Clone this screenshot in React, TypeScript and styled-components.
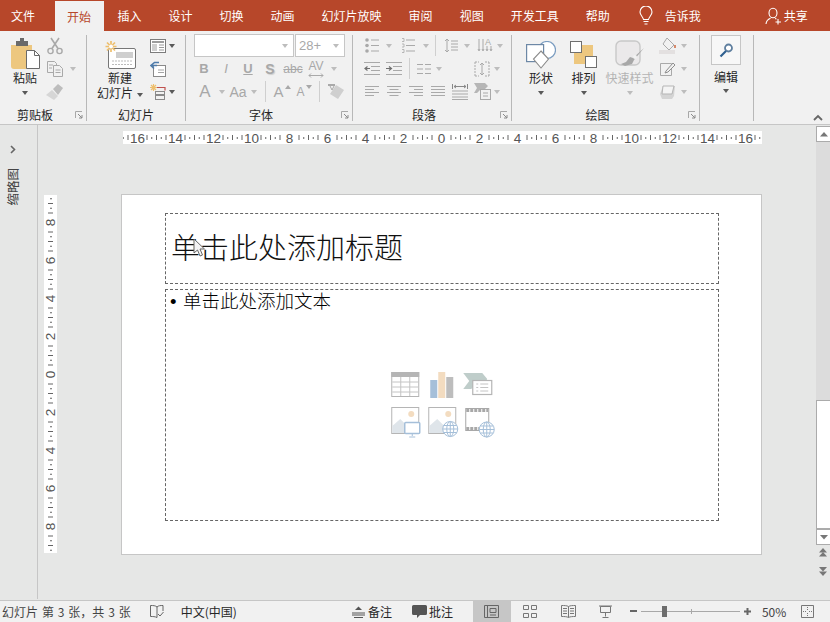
import React from "react";
import styled, { createGlobalStyle } from "styled-components";

const GlobalStyle = createGlobalStyle`
  html, body { margin: 0; padding: 0; }
  body {
    width: 830px;
    height: 622px;
    overflow: hidden;
    font-family: "Noto Sans CJK SC", "Noto Sans", sans-serif;
    font-size: 12px;
    color: #262626;
  }
`;

const Page = styled.div`
  display: flex;
  flex-direction: column;
  width: 830px;
  height: 622px;
  background: #e6e7e6;
`;

/* title tabs */
const TabBar = styled.div`
  display: flex;
  align-items: stretch;
  height: 31px;
  background: #b7472a;
  color: #fff;
`;

const Tab = styled.div<{ $active?: boolean; $first?: boolean }>`
  display: flex;
  align-items: center;
  height: ${(p) => (p.$active ? "30px" : "31px")};
  margin-top: ${(p) => (p.$active ? "1px" : "0")};
  padding: ${(p) => (p.$active ? "0 13px 0 12px" : p.$first ? "0 20px 0 11px" : "0 13.5px")};
  background: ${(p) => (p.$active ? "#f1f1f1" : "transparent")};
  color: ${(p) => (p.$active ? "#b7472a" : "#fff")};
`;

const TellMe = styled.div`
  display: flex;
  align-items: center;
  gap: 12px;
  margin-left: 15.5px;
`;

const Share = styled.div`
  display: flex;
  align-items: center;
  gap: 2px;
  margin-left: 64px;
`;

/* ribbon */
const Ribbon = styled.div`
  position: relative;
  display: flex;
  height: 93px;
  background: #f1f1f1;
  border-bottom: 1px solid #c6c6c6;
`;

const Group = styled.section<{ $w: number }>`
  position: relative;
  display: flex;
  flex-direction: column;
  box-sizing: border-box;
  width: ${(p) => p.$w}px;
  margin: 4px 0 3px;
  border-right: 1px solid #b8b8b8;
`;

const GroupBody = styled.div<{ $pl?: number }>`
  display: flex;
  height: 69px;
  margin-top: -1px;
  padding-left: ${(p) => p.$pl ?? 0}px;
`;

const GroupLabel = styled.div<{ $launcher?: boolean }>`
  height: 17px;
  padding-right: ${(p) => (p.$launcher ? "16px" : "0")};
  text-align: center;
  line-height: 17px;
  margin-top: 3px;
`;

const Launcher = styled.svg`
  position: absolute;
  right: 3px;
  bottom: 2px;
  width: 8px;
  height: 8px;
`;

const BigButton = styled.div<{ $w: number; $muted?: boolean }>`
  display: flex;
  flex-direction: column;
  align-items: center;
  width: ${(p) => p.$w}px;
  color: ${(p) => (p.$muted ? "#b4b4b4" : "#262626")};
  line-height: 15px;
`;

const BigIcon = styled.div`
  display: flex;
  align-items: flex-end;
  justify-content: center;
  height: 35px;
  margin-bottom: 1px;
`;

const Column = styled.div`
  display: flex;
  flex-direction: column;
`;

const Row = styled.div`
  display: flex;
  align-items: center;
  height: 23px;
`;

const Cell = styled.div<{ $w: number }>`
  display: flex;
  align-items: center;
  justify-content: center;
  flex: none;
  width: ${(p) => p.$w}px;
  height: 23px;
`;

const StackCell = styled(Cell)`
  flex-direction: column;
  gap: 1px;
`;

const Glyph = styled.span<{ $size?: number; $weight?: number; $italic?: boolean; $under?: boolean; $strike?: boolean; $shadow?: boolean }>`
  font-family: "Liberation Sans", Arial, sans-serif;
  font-size: ${(p) => p.$size ?? 13}px;
  font-weight: ${(p) => p.$weight ?? 400};
  font-style: ${(p) => (p.$italic ? "italic" : "normal")};
  text-decoration: ${(p) => (p.$under ? "underline" : p.$strike ? "line-through" : "none")};
  text-shadow: ${(p) => (p.$shadow ? "1px 1px 1px #cfcfcf" : "none")};
  color: #a8a8a8;
  line-height: 1;
`;

const Caret = styled.i<{ $dark?: boolean }>`
  display: inline-block;
  flex: none;
  width: 0;
  height: 0;
  border-left: 3.5px solid transparent;
  border-right: 3.5px solid transparent;
  border-top: 4px solid ${(p) => (p.$dark ? "#595959" : "#bdbdbd")};
`;

const InlineCaret = styled(Caret)`
  margin-left: 4px;
  vertical-align: middle;
`;

const BigCaret = styled.div`
  display: flex;
  justify-content: center;
  margin-top: 6px;
`;

const EditCaret = styled(Caret)`
  margin-top: 1px;
`;

const FontStep = styled.svg`
  flex: none;
  width: 6px;
  height: 4px;
  margin: -10px 0 0 1px;
`;

const VSep = styled.div`
  flex: none;
  width: 1px;
  height: 21px;
  background: #cfcfcf;
`;

const Combo = styled.div<{ $w: number }>`
  display: flex;
  align-items: center;
  justify-content: space-between;
  box-sizing: border-box;
  width: ${(p) => p.$w}px;
  height: 23px;
  margin-right: 1px;
  padding: 0 5px 0 3px;
  background: #fff;
  border: 1px solid #c6c6c6;
  font-family: "Liberation Sans", Arial, sans-serif;
  font-size: 13px;
  color: #a8a8a8;
`;

const FindBox = styled.div`
  display: flex;
  align-items: center;
  justify-content: center;
  box-sizing: border-box;
  width: 30px;
  height: 30px;
  margin: 1px 0 0;
  border: 1px solid #c6c6c6;
  background: #f7f7f7;
`;

const Collapse = styled.svg`
  position: absolute;
  right: 7px;
  bottom: 3px;
  width: 10px;
  height: 7px;
`;

/* work area */
const Work = styled.div`
  display: flex;
  flex: 1;
  min-height: 0;
`;

const ThumbPane = styled.div`
  display: flex;
  flex-direction: column;
  align-items: center;
  box-sizing: border-box;
  width: 38px;
  padding: 20px 12px 0 0;
  border-right: 1px solid #c6c6c6;
  margin-bottom: 1px;
  color: #555;
`;

const PaneTitle = styled.div`
  writing-mode: vertical-rl;
  text-orientation: sideways;
  transform: rotate(180deg);
  margin-top: 14px;
  font-size: 12.5px;
  line-height: 14px;
  color: #444;
`;

const Stage = styled.div`
  display: flex;
  flex-direction: column;
  width: 778px;
`;

const HRuler = styled.svg`
  display: block;
  width: 639px;
  height: 13px;
  margin: 6px 0 0 85px;
  background: #fff;
`;

const StageRow = styled.div`
  display: flex;
  align-items: flex-start;
  margin: 50px 0 0 6px;
`;

const VRuler = styled.svg`
  flex: none;
  display: block;
  width: 13px;
  height: 358px;
  margin-top: 1px;
  background: #fff;
`;

const Slide = styled.div`
  display: flex;
  flex-direction: column;
  box-sizing: border-box;
  width: 641px;
  height: 361px;
  margin-left: 64px;
  padding: 18px 0 0 43px;
  background: #fff;
  border: 1px solid #c6c6c6;
`;

const Placeholder = styled.div`
  box-sizing: border-box;
  width: 554px;
  border: 1px dashed #666;
`;

const TitleBox = styled(Placeholder)`
  position: relative;
  display: flex;
  align-items: center;
  height: 71px;
  padding: 0 0 6px 5px;
  font-size: 29px;
  font-weight: 300;
  color: #111;
`;

const BodyBox = styled(Placeholder)`
  position: relative;
  height: 232px;
  margin-top: 5px;
  padding: 0 4px;
  font-size: 18.5px;
  font-weight: 300;
  line-height: 21px;
  color: #000;
`;

const Bullet = styled.span`
  display: inline-block;
  width: 13px;
  font-family: "Liberation Sans", Arial, sans-serif;
`;

const Cursor = styled.svg`
  position: absolute;
  left: 27px;
  top: 24px;
  width: 12px;
  height: 19px;
`;

const ContentIcons = styled.div`
  position: absolute;
  left: 50%;
  top: 50%;
  display: grid;
  grid-template-columns: repeat(3, 36.5px);
  grid-auto-rows: 34px;
  transform: translate(calc(-50% + 2px), -50%);
`;

const ContentIcon = styled.svg`
  width: 36.5px;
  height: 34px;
`;

/* scrollbar */
const ScrollBar = styled.div`
  display: flex;
  flex-direction: column;
  width: 14px;
  margin-top: 1px;
`;

const ScrollButton = styled.div`
  display: flex;
  align-items: center;
  justify-content: center;
  box-sizing: border-box;
  flex: none;
  height: 16px;
  background: #fff;
  border: 1px solid #ababab;
  border-right: 0;
`;

const ScrollTrack = styled.div`
  height: 258px;
  background: #dcdcdc;
`;

const ScrollThumb = styled.div`
  box-sizing: border-box;
  height: 129px;
  background: #fff;
  border: 1px solid #ababab;
  border-right: 0;
`;

const PageArrows = styled.div`
  display: flex;
  flex-direction: column;
  align-items: center;
  gap: 10px;
  margin-top: 3px;
`;

/* status bar */
const StatusBar = styled.footer`
  display: flex;
  align-items: center;
  box-sizing: border-box;
  height: 22px;
  border-top: 1px solid #c6c6c6;
  background: #f1f1f1;
  color: #444;
  font-size: 12px;
`;

const StatusText = styled.span<{ $ml?: number; $dark?: boolean; $wide?: boolean }>`
  margin-left: ${(p) => p.$ml ?? 0}px;
  color: ${(p) => (p.$dark ? "#262626" : "#444")};
  word-spacing: ${(p) => (p.$wide ? "1.2px" : "0")};
  white-space: pre;
`;

const StatusIcon = styled.div<{ $w: number; $ml?: number; $active?: boolean }>`
  display: flex;
  align-items: center;
  justify-content: center;
  flex: none;
  width: ${(p) => p.$w}px;
  height: 21px;
  margin-left: ${(p) => p.$ml ?? 0}px;
  background: ${(p) => (p.$active ? "#c6c6c6" : "transparent")};
`;

const ZoomTrack = styled.div`
  position: relative;
  width: 99px;
  height: 1px;
  margin: 0 4px 0 4px;
  background: #a8a8a8;
`;

const ZoomThumb = styled.div`
  position: absolute;
  left: 21px;
  top: -5px;
  width: 5px;
  height: 11px;
  background: #6d6d6d;
`;

const ZoomTick = styled.div`
  position: absolute;
  left: 50px;
  top: -2px;
  width: 1px;
  height: 5px;
  background: #a8a8a8;
`;

/* icons */
const G = "#a9a9a9";
const D = "#6f6f6f";

const Svg = ({ w, h, children }: { w: number; h: number; children: React.ReactNode }) => (
  <svg width={w} height={h} viewBox={`0 0 ${w} ${h}`} fill="none">
    {children}
  </svg>
);

const PasteIcon = () => (
  <Svg w={30} h={32}>
    <path d="M1 8h21v24H4a3 3 0 0 1-3-3z" fill="#edc77f" />
    <path d="M6 4h4V1h4v3h4v5H6z" fill="#6a6a6a" />
    <path d="M16.5 13.5h8l5 5v13h-13z" fill="#fff" stroke="#6a6a6a" />
    <path d="M24.5 13.5v5h5" stroke="#6a6a6a" />
  </Svg>
);
const ScissorsIcon = () => (
  <Svg w={16} h={18}>
    <circle cx="3.5" cy="14" r="2.6" stroke={G} strokeWidth="1.4" />
    <circle cx="12.5" cy="14" r="2.6" stroke={G} strokeWidth="1.4" />
    <path d="M5 11.5 12 1M11 11.5 4 1" stroke={G} strokeWidth="1.6" />
  </Svg>
);
const CopyIcon = () => (
  <Svg w={16} h={16}>
    <path d="M.5.5h7l2 2v9h-9z" fill="#f1f1f1" stroke={G} />
    <path d="M6.5 4.5h6l3 3v8h-9z" fill="#f1f1f1" stroke={G} />
    <path d="M2 4h4M2 7h3M8.5 9h5M8.5 11.5h5" stroke={G} />
  </Svg>
);
const BrushIcon = () => (
  <Svg w={18} h={16}>
    <path d="M0 11 6 6l6 6-4 4z" fill="#d6d6d6" />
    <path d="M7 5l5-5 5 4-5 7z" fill="#bdbdbd" />
  </Svg>
);
const NewSlideIcon = () => (
  <Svg w={31} h={28}>
    <rect x="3.5" y="7.5" width="27" height="20" rx="1.5" fill="#fff" stroke="#777" />
    <rect x="11" y="11" width="17" height="6" fill="#cfcfcf" />
    <path d="M7 20h20M7 23.5h20" stroke="#bbb" strokeDasharray="2 1" />
    <path d="M6 0v11M.5 5.5h11M2 1.5l8 8M10 1.5l-8 8" stroke="#eebf6d" strokeWidth="1.7" />
    <circle cx="6" cy="5.5" r="2" fill="#fff" />
  </Svg>
);
const LayoutIcon = () => (
  <Svg w={16} h={14}>
    <rect x=".5" y=".5" width="15" height="13" fill="#fff" stroke="#7c7c7c" />
    <path d="M2 3h12" stroke="#7c7c7c" strokeWidth="1.5" />
    <rect x="2" y="5" width="5" height="7" fill="#cfcfcf" />
    <path d="M9 6h5M9 8.5h5M9 11h5" stroke="#9a9a9a" />
  </Svg>
);
const ResetIcon = () => (
  <Svg w={16} h={16}>
    <rect x="3.5" y="4.5" width="12" height="11" fill="#fff" stroke="#8a8a8a" />
    <path d="M8 9h6M8 11.5h6" stroke="#a5a5a5" />
    <path d="M9 1.5H4.5L1 4.5l3 3M1.5 4.5H7" stroke="#4f7cab" strokeWidth="1.6" />
  </Svg>
);
const SectionIcon = () => (
  <Svg w={16} h={16}>
    <path d="M3.5 0v7M0 3.5h7M1 1l5 5M6 1 1 6" stroke="#eebf6d" strokeWidth="1.2" />
    <path d="M7 3.5h8v3" stroke="#c0504d" strokeWidth="1.2" />
    <rect x="5.5" y="7.5" width="9" height="3" stroke="#8a8a8a" />
    <rect x="5.5" y="11.5" width="9" height="4" stroke="#8a8a8a" />
  </Svg>
);
const EraserIcon = () => (
  <Svg w={18} h={18}>
    <path d="M9 2 17 7l-6 9-8-5z" fill="#cfcfcf" />
    <path d="M1 1h7v2H1z" fill={G} />
    <path d="M3 3l2 4 2-4" stroke={G} />
  </Svg>
);
const BulletsIcon = () => (
  <Svg w={14} h={15}>
    {[2, 7.5, 13].map((y) => (
      <g key={y}>
        <circle cx="2" cy={y} r="1.8" fill={G} />
        <path d={`M6 ${y}h8`} stroke={G} />
      </g>
    ))}
  </Svg>
);
const NumberingIcon = () => (
  <Svg w={14} h={15}>
    {[2, 7.5, 13].map((y) => (
      <g key={y}>
        <path d={`M1 ${y - 1.5}h2v3H1`} stroke={G} strokeWidth=".8" />
        <path d={`M5 ${y}h9`} stroke={G} />
      </g>
    ))}
  </Svg>
);
const LineSpacingIcon = () => (
  <Svg w={14} h={15}>
    <path d="M3 1v13M1 3l2-2 2 2M1 12l2 2 2-2" stroke={G} />
    <path d="M7 3h7M7 6h7M7 9h7M7 12h7" stroke={G} />
  </Svg>
);
const TextDirIcon = () => (
  <Svg w={16} h={16}>
    <path d="M2 1v11M6 1v11M10 8v4M14 8v4M1 11l1 2 1-2M5 11l1 2 1-2M9 11l1 2 1-2M13 11l1 2 1-2" stroke={G} />
    <text x="8" y="7" fontFamily="Liberation Sans" fontSize="9" fill={G}>A</text>
  </Svg>
);
const IndentIcon = ({ flip }: { flip?: boolean }) => (
  <Svg w={16} h={13}>
    <path d="M0 .5h16M7 4.5h9M7 8.5h9M0 12.5h16" stroke={G} />
    <path d={flip ? "M0 6.5h5M3 4.5l2.5 2-2.5 2" : "M1 6.5h5M3.5 4.500 1 6.5l2.5 2"} stroke={D} strokeWidth="1.2" />
  </Svg>
);
const ColumnsIcon = () => (
  <Svg w={14} h={12}>
    <path d="M0 1.5h6M8 1.5h6M0 6h6M8 6h6M0 10.5h6M8 10.5h6" stroke={G} />
  </Svg>
);
const AlignTextIcon = () => (
  <Svg w={16} h={16}>
    <path d="M1 1h4M11 1h4M1 15h4M11 15h4M1 1v14M15 1v14" stroke={G} strokeDasharray="2 1" />
    <path d="M8 2v12M6 4l2-2 2 2M6 12l2 2 2-2" stroke={G} />
  </Svg>
);
const AlignIcon = ({ mode }: { mode: "l" | "c" | "r" | "j" }) => {
  const short = mode === "j" ? [0, 14] : mode === "l" ? [0, 9] : mode === "c" ? [2.5, 11.5] : [5, 14];
  return (
    <Svg w={14} h={11}>
      <path d={`M0 .5h14M${short[0]} 3.5H${short[1]}M0 6.5h14M${short[0]} 9.5H${short[1]}`} stroke={G} />
    </Svg>
  );
};
const DistributeIcon = () => (
  <Svg w={16} h={16}>
    <path d="M.5 0v5M15.5 0v5M2 2.5h12M4 1 2 2.5 4 4M12 1l2 1.5L12 4" stroke="#888" />
    <path d="M0 7h16M0 10h16M0 13h16M0 15.5h16" stroke={G} />
  </Svg>
);
const SmartArtIcon = () => (
  <Svg w={17} h={17}>
    <path d="M0 0h11l3 3-3 3 1 1H6L3 10H0l3-5z" fill="#b6b6b6" />
    <rect x="6.5" y="6.5" width="10" height="10" fill="#f1f1f1" stroke={G} />
    <path d="M9 10h5M9 13h5" stroke={G} />
  </Svg>
);
const ShapesIcon = () => (
  <Svg w={30} h={28}>
    <circle cx="21" cy="9" r="8.5" fill="#fff" stroke="#7a9cc0" strokeWidth="1.2" />
    <rect x=".6" y="3.6" width="17" height="17" fill="#fff" stroke="#6d88a6" strokeWidth="1.2" />
    <path d="M15 10l7.5 8L15 27l-7.5-9z" fill="#fff" stroke="#8a8a8a" strokeWidth="1.1" />
  </Svg>
);
const ArrangeIcon = () => (
  <Svg w={28} h={28}>
    <rect x="4" y="4" width="19" height="19" fill="#edc77f" />
    <rect x=".5" y=".5" width="11" height="11" fill="#fff" stroke="#6f6f6f" strokeWidth="1" />
    <rect x="15.5" y="15.5" width="11" height="11" fill="#fff" stroke="#6f6f6f" strokeWidth="1" />
  </Svg>
);
const QuickStyleIcon = () => (
  <Svg w={30} h={29}>
    <rect x="1" y="1" width="24" height="24" rx="5" fill="#ebe9ea" stroke="#c8c8c8" strokeWidth="1.4" />
    <path d="M29 8 18 18l-3-1-4 5-5 2 4 2 7-2 2-4z" fill="#a8a8a8" />
    <circle cx="20" cy="17" r="2" fill="#f1f1f1" />
  </Svg>
);
const FillIcon = () => (
  <Svg w={18} h={17}>
    <path d="M8 1 15 8l-5 5-6-6z" fill="#f1f1f1" stroke={G} />
    <path d="M15 8h2v3h-2z" fill="#d58a6c" />
    <rect x="0" y="13" width="16" height="4" fill="#e3e0e0" />
  </Svg>
);
const OutlineIcon = () => (
  <Svg w={16} h={15}>
    <path d="M.5 2.5h11v12H.5z" fill="#f1f1f1" stroke={G} />
    <path d="M6 10 13 2l2 2-7 7-3 1z" fill="#f1f1f1" stroke="#8f8f8f" />
  </Svg>
);
const EffectIcon = () => (
  <Svg w={16} h={14}>
    <path d="M3 1h12l-1 10-2 3H2L0 9z" fill="#d4d4d4" />
    <path d="M3 1h11L12 9H2z" fill="#f4f4f4" stroke="#b5b5b5" />
  </Svg>
);
const SearchIcon = () => (
  <Svg w={14} h={15}>
    <circle cx="9.5" cy="5" r="3.5" stroke="#5f7f9f" strokeWidth="1.8" fill="#fff" />
    <path d="M7 8 1.5 13.5" stroke="#2f6090" strokeWidth="2.2" />
  </Svg>
);
const BulbIcon = () => (
  <Svg w={14} h={20}>
    <path d="M4.5 13.5C4 10.5 1 9.5 1 6a6 6 0 0 1 12 0c0 3.5-3 4.5-3.5 7.5z" stroke="#fff" strokeWidth="1.1" />
    <path d="M4.5 15.5h5M5.5 18h3" stroke="#fff" strokeWidth="1.2" />
  </Svg>
);
const PersonIcon = () => (
  <Svg w={17} h={18}>
    <ellipse cx="8" cy="6" rx="4" ry="4.8" stroke="#fff" strokeWidth="1.1" />
    <path d="M1 17c.3-3.5 2.5-5 4.5-5.8M10 11.5l1.5.5" stroke="#fff" strokeWidth="1.1" />
    <path d="M13 12v5.5M10.5 15h5.500" stroke="#fff" strokeWidth="1.1" />
  </Svg>
);

const TableIcon = () => (
  <ContentIcon viewBox="0 0 36.5 34">
    <rect x="2.5" y="1.5" width="27" height="24" fill="#fff" stroke="#b5b5b5" />
    <rect x="2" y="1" width="28" height="5" fill="#b5b5b5" />
    <path d="M11.5 6v19M20.5 6v19M3 11h26M3 16h26M3 21h26" stroke="#c4c4c4" />
  </ContentIcon>
);
const ChartIcon = () => (
  <ContentIcon viewBox="0 0 36.5 34">
    <rect x="4" y="9" width="7" height="18" fill="#a5bfd9" />
    <rect x="12" y="1" width="7" height="26" fill="#f3dcc0" />
    <rect x="20" y="6" width="7" height="21" fill="#bdbdbd" />
  </ContentIcon>
);
const SmartIcon = () => (
  <ContentIcon viewBox="0 0 36.5 34">
    <path d="M1 2h19l5 6-5 8h-9l-2 2H1l6-8z" fill="#bfcdca" />
    <rect x="10.5" y="9.5" width="19" height="14" fill="#fff" stroke="#b5b5b5" strokeWidth="1.2" />
    <path d="M14 13h2M18 13h8M14 16.5h2M18 16.5h8M14 20h2M18 20h8" stroke="#c4c4c4" />
  </ContentIcon>
);
const Globe = ({ x, y }: { x: number; y: number }) => (
  <g stroke="#a5bfd9" fill="#fff">
    <circle cx={x} cy={y} r="7.5" />
    <ellipse cx={x} cy={y} rx="3.5" ry="7.5" />
    <path d={`M${x} ${y - 7.5}v15M${x - 7.5} ${y}h15M${x - 6.5} ${y - 3.5}h13M${x - 6.5} ${y + 3.5}h13`} />
  </g>
);
const PictureIcon = ({ globe }: { globe?: boolean }) => (
  <ContentIcon viewBox="0 0 36.5 34">
    <rect x="2.5" y="2.5" width="27" height="26" fill="#fff" stroke="#b5b5b5" />
    <path d="M3 28v-7l8-7 7 7 2 7z" fill="#dfe5ea" />
    <circle cx="22" cy="9" r="3" fill="#f3dcc0" />
    {globe ? (
      <Globe x={24} y={24} />
    ) : (
      <g>
        <rect x="15.5" y="17.5" width="15" height="11" rx="1" fill="#fff" stroke="#a5bfd9" strokeWidth="1.5" />
        <path d="M23 29v2M20 32h6" stroke="#a5bfd9" />
      </g>
    )}
  </ContentIcon>
);
const VideoIcon = () => (
  <ContentIcon viewBox="0 0 36.5 34">
    <rect x="3.5" y="3.5" width="23" height="22" fill="#fff" stroke="#a8a8a8" />
    <path d="M4 5.5h22M4 23.5h22" stroke="#a8a8a8" strokeWidth="3" strokeDasharray="3 1" />
    <Globe x={24.5} y={24.5} />
  </ContentIcon>
);

const Triangle = ({ up, dbl }: { up?: boolean; dbl?: boolean }) => (
  <svg width="8" height={dbl ? 9 : 5} viewBox={`0 0 8 ${dbl ? 9 : 5}`} fill="#777">
    {up ? <path d="M4 0l4 4.5H0z" /> : <path d="M0 0h8L4 4.5z" />}
    {dbl && (up ? <path d="M4 4l4 4.5H0z" /> : <path d="M0 4.5h8L4 9z" />)}
  </svg>
);

const LauncherMark = () => (
  <Launcher viewBox="0 0 8 8" fill="none">
    <path d="M.5 7V.5H7" stroke="#a8a8a8" />
    <path d="M3 3l4 4M4 7h3V4" stroke="#8a8a8a" />
  </Launcher>
);

const StepMark = ({ down }: { down?: boolean }) => (
  <FontStep viewBox="0 0 6 4">
    <path d={down ? "M0 0h6L3 4z" : "M3 0l3 4H0z"} fill="#a8a8a8" />
  </FontStep>
);

/* rulers */
const hZero = 318;
const step = 4.75;
const rulerIdx = Array.from({ length: 135 }, (_, i) => i - 67);

const hiddenTick = (i: number) => {
  const m = Math.abs(i % 8);
  return m === 0 || m === 1 || m === 7;
};

const HorizontalRuler = () => (
  <HRuler viewBox="0 0 639 13">
    {rulerIdx.map((i) => {
      if (hiddenTick(i)) return null;
      const long = i % 2 === 0;
      return <rect key={i} x={hZero + i * step} y={long ? 4 : 6} width="1" height={long ? 5 : 2} fill="#666" />;
    })}
    {rulerIdx
      .filter((i) => i % 8 === 0)
      .map((i) => (
        <text key={i} x={hZero + i * step + 0.5} y="11.5" textAnchor="middle" fontFamily="Liberation Sans" fontSize="13.5" fill="#555">
          {Math.abs(i) / 4}
        </text>
      ))}
  </HRuler>
);

const vZero = 179;
const VerticalRuler = () => (
  <VRuler viewBox="0 0 13 358">
    {Array.from({ length: 77 }, (_, i) => i - 38).map((i) => {
      if (hiddenTick(i)) return null;
      const long = i % 2 === 0;
      return <rect key={i} x={long ? 4 : 6} y={vZero + i * step} width={long ? 5 : 2} height="1" fill="#666" />;
    })}
    {[-8, -6, -4, -2, 0, 2, 4, 6, 8].map((n) => (
      <text
        key={n}
        transform={`translate(11 ${vZero + n * 19 + 0.5}) rotate(-90)`}
        textAnchor="middle"
        fontFamily="Liberation Sans"
        fontSize="13.5"
        fill="#555"
      >
        {Math.abs(n)}
      </text>
    ))}
  </VRuler>
);

const TABS = ["插入", "设计", "切换", "动画", "幻灯片放映", "审阅", "视图", "开发工具", "帮助"];

const App = () => (
  <Page>
    <GlobalStyle />
    <TabBar>
      <Tab $first>文件</Tab>
      <Tab $active>开始</Tab>
      {TABS.map((t) => (
        <Tab key={t}>{t}</Tab>
      ))}
      <TellMe>
        <BulbIcon />
        告诉我
      </TellMe>
      <Share>
        <PersonIcon />
        共享
      </Share>
    </TabBar>

    <Ribbon>
      <Group $w={87}>
        <GroupBody $pl={10}>
          <BigButton $w={30}>
            <BigIcon>
              <PasteIcon />
            </BigIcon>
            粘贴
            <BigCaret>
              <Caret $dark />
            </BigCaret>
          </BigButton>
          <Column>
            <Row>
              <Cell $w={30}>
                <ScissorsIcon />
              </Cell>
            </Row>
            <Row>
              <Cell $w={30}>
                <CopyIcon />
              </Cell>
              <Caret />
            </Row>
            <Row>
              <Cell $w={30}>
                <BrushIcon />
              </Cell>
            </Row>
          </Column>
        </GroupBody>
        <GroupLabel $launcher>剪贴板</GroupLabel>
        <LauncherMark />
      </Group>

      <Group $w={99}>
        <GroupBody $pl={6}>
          <BigButton $w={54}>
            <BigIcon>
              <NewSlideIcon />
            </BigIcon>
            新建
            <div>
              幻灯片
              <InlineCaret $dark />
            </div>
          </BigButton>
          <Column>
            <Row>
              <Cell $w={22}>
                <LayoutIcon />
              </Cell>
              <Caret $dark />
            </Row>
            <Row>
              <Cell $w={22}>
                <ResetIcon />
              </Cell>
            </Row>
            <Row>
              <Cell $w={22}>
                <SectionIcon />
              </Cell>
              <Caret $dark />
            </Row>
          </Column>
        </GroupBody>
        <GroupLabel>幻灯片</GroupLabel>
      </Group>

      <Group $w={167}>
        <GroupBody $pl={7}>
          <Column>
            <Row>
              <Cell $w={1} />
              <Combo $w={100}>
                <span />
                <Caret />
              </Combo>
              <Combo $w={50}>
                28+
                <Caret />
              </Combo>
            </Row>
            <Row>
              <Cell $w={22}><Glyph $weight={700}>B</Glyph></Cell>
              <Cell $w={22}><Glyph $italic>I</Glyph></Cell>
              <Cell $w={22}><Glyph $under $weight={700}>U</Glyph></Cell>
              <Cell $w={22}><Glyph $weight={700} $size={14} $shadow>S</Glyph></Cell>
              <Cell $w={24}><Glyph $strike $size={12}>abc</Glyph></Cell>
              <StackCell $w={22}>
                <Glyph $size={12}>AV</Glyph>
                <svg width="16" height="5" viewBox="0 0 16 5" fill="none">
                  <path d="M1 2.5h14M3 .5l-2 2 2 2M13 .5l2 2-2 2" stroke={G} />
                </svg>
              </StackCell>
              <Cell $w={14}><Caret /></Cell>
            </Row>
            <Row>
              <Cell $w={24}><Glyph $size={17}>A</Glyph></Cell>
              <Cell $w={10}><Caret /></Cell>
              <Cell $w={22}><Glyph $size={14}>Aa</Glyph></Cell>
              <Cell $w={10}><Caret /></Cell>
              <Cell $w={6} />
              <VSep />
              <Cell $w={5} />
              <Cell $w={22}><Glyph $size={15}>A</Glyph><StepMark /></Cell>
              <Cell $w={22}><Glyph $size={12}>A</Glyph><StepMark down /></Cell>
              <Cell $w={4} />
              <VSep />
              <Cell $w={7} />
              <EraserIcon />
            </Row>
          </Column>
        </GroupBody>
        <GroupLabel $launcher>字体</GroupLabel>
        <LauncherMark />
      </Group>

      <Group $w={159}>
        <GroupBody $pl={8}>
          <Column>
            <Row>
              <Cell $w={21}><BulletsIcon /></Cell>
              <Cell $w={14}><Caret /></Cell>
              <Cell $w={24}><NumberingIcon /></Cell>
              <Cell $w={12}><Caret /></Cell>
              <Cell $w={3} />
              <VSep />
              <Cell $w={4} />
              <Cell $w={22}><LineSpacingIcon /></Cell>
              <Cell $w={9}><Caret /></Cell>
              <Cell $w={3} />
              <Cell $w={22}><TextDirIcon /></Cell>
              <Cell $w={7}><Caret /></Cell>
            </Row>
            <Row>
              <Cell $w={22}><IndentIcon /></Cell>
              <Cell $w={22}><IndentIcon flip /></Cell>
              <Cell $w={4} />
              <VSep />
              <Cell $w={4} />
              <Cell $w={20}><ColumnsIcon /></Cell>
              <Cell $w={10}><Caret /></Cell>
              <Cell $w={27} />
              <Cell $w={22}><AlignTextIcon /></Cell>
              <Cell $w={7}><Caret /></Cell>
            </Row>
            <Row>
              <Cell $w={22}><AlignIcon mode="l" /></Cell>
              <Cell $w={22}><AlignIcon mode="c" /></Cell>
              <Cell $w={22}><AlignIcon mode="r" /></Cell>
              <Cell $w={22}><AlignIcon mode="j" /></Cell>
              <Cell $w={22}><DistributeIcon /></Cell>
              <Cell $w={22}><SmartArtIcon /></Cell>
              <Cell $w={7}><Caret /></Cell>
            </Row>
          </Column>
        </GroupBody>
        <GroupLabel $launcher>段落</GroupLabel>
        <LauncherMark />
      </Group>

      <Group $w={188}>
        <GroupBody $pl={8}>
          <BigButton $w={42}>
            <BigIcon>
              <ShapesIcon />
            </BigIcon>
            形状
            <BigCaret>
              <Caret $dark />
            </BigCaret>
          </BigButton>
          <BigButton $w={43}>
            <BigIcon>
              <ArrangeIcon />
            </BigIcon>
            排列
            <BigCaret>
              <Caret $dark />
            </BigCaret>
          </BigButton>
          <BigButton $w={49} $muted>
            <BigIcon>
              <QuickStyleIcon />
            </BigIcon>
            快速样式
            <BigCaret>
              <Caret />
            </BigCaret>
          </BigButton>
          <Column>
            <Row>
              <Cell $w={27}><FillIcon /></Cell>
              <Caret />
            </Row>
            <Row>
              <Cell $w={27}><OutlineIcon /></Cell>
              <Caret />
            </Row>
            <Row>
              <Cell $w={27}><EffectIcon /></Cell>
              <Caret />
            </Row>
          </Column>
        </GroupBody>
        <GroupLabel $launcher>绘图</GroupLabel>
        <LauncherMark />
      </Group>

      <Group $w={54}>
        <GroupBody $pl={11}>
          <BigButton $w={30}>
            <FindBox>
              <SearchIcon />
            </FindBox>
            <Cell $w={30}>编辑</Cell>
            <EditCaret $dark />
          </BigButton>
        </GroupBody>
      </Group>

      <Collapse viewBox="0 0 10 7" fill="none">
        <path d="M1 6l4-4 4 4" stroke="#666" strokeWidth="1.8" />
      </Collapse>
    </Ribbon>

    <Work>
      <ThumbPane>
        <svg width="6" height="9" viewBox="0 0 6 9" fill="none">
          <path d="M1 1l3.5 3.5L1 8" stroke="#666" strokeWidth="1.6" />
        </svg>
        <PaneTitle>缩略图</PaneTitle>
      </ThumbPane>

      <Stage>
        <HorizontalRuler />
        <StageRow>
          <VerticalRuler />
          <Slide>
            <TitleBox>
              单击此处添加标题
              <Cursor viewBox="0 0 12 19">
                <path d="M1 1v14l3.5-3 2.500 6 2.500-1-2.500-6h4.500z" fill="#f4f4f4" stroke="#666" />
              </Cursor>
            </TitleBox>
            <BodyBox>
              <Bullet>•</Bullet>单击此处添加文本
              <ContentIcons>
                <TableIcon />
                <ChartIcon />
                <SmartIcon />
                <PictureIcon />
                <PictureIcon globe />
                <VideoIcon />
              </ContentIcons>
            </BodyBox>
          </Slide>
        </StageRow>
      </Stage>

      <ScrollBar>
        <ScrollButton>
          <Triangle up />
        </ScrollButton>
        <ScrollTrack />
        <ScrollThumb />
        <ScrollButton>
          <Triangle />
        </ScrollButton>
        <PageArrows>
          <Triangle up dbl />
          <Triangle dbl />
        </PageArrows>
      </ScrollBar>
    </Work>

    <StatusBar>
      <StatusText $ml={2} $wide>幻灯片 第 3 张，共 3 张</StatusText>
      <StatusIcon $w={16} $ml={18}>
        <svg width="14" height="13" viewBox="0 0 14 13" fill="none">
          <path d="M7 2C5.5.5 3 .5.5.5v11c2.5 0 4.5 0 6.5 1V2c1.5-1.5 3.5-1.5 6-1.5V6M7 12.5" stroke="#666" />
          <path d="M8 9l2 2 3.5-4" stroke="#666" />
        </svg>
      </StatusIcon>
      <StatusText $ml={16} $dark>中文(中国)</StatusText>
      <StatusIcon $w={14} $ml={115}>
        <svg width="13" height="12" viewBox="0 0 13 12" fill="none">
          <path d="M3 4l3.5-3.5L10 4z" fill="#555" />
          <path d="M0 7h13M0 9h13M2 11.5h9" stroke="#555" />
        </svg>
      </StatusIcon>
      <StatusText $ml={2} $dark>备注</StatusText>
      <StatusIcon $w={16} $ml={20}>
        <svg width="15" height="13" viewBox="0 0 15 13" fill="#555">
          <path d="M1.5 0h12A1.5 1.5 0 0 1 15 1.5v7A1.5 1.5 0 0 1 13.5 10H8l-3 3v-3H1.5A1.5 1.5 0 0 1 0 8.5v-7A1.5 1.5 0 0 1 1.5 0z" />
        </svg>
      </StatusIcon>
      <StatusText $ml={1} $dark>批注</StatusText>
      <StatusIcon $w={38} $ml={20} $active>
        <svg width="15" height="13" viewBox="0 0 15 13" fill="none">
          <path d="M.5.5h14v12H.5zM3.5.5v12M6 3.5h6v4H6zM6 10h6" stroke="#666" />
        </svg>
      </StatusIcon>
      <StatusIcon $w={14} $ml={12}>
        <svg width="14" height="13" viewBox="0 0 14 13" fill="none">
          <path d="M.5.5h5v4h-5zM8.5.5h5v4h-5zM.5 8.5h5v4h-5zM8.5 8.5h5v4h-5z" stroke="#777" />
        </svg>
      </StatusIcon>
      <StatusIcon $w={16} $ml={24}>
        <svg width="15" height="13" viewBox="0 0 15 13" fill="none">
          <path d="M.5.5C3 .5 6 .5 7.5 1.5 9 .5 12 .5 14.5.5v11c-2.5 0-5.500 0-7 1-1.500-1-4.500-1-7-1zM7.5 1.5v11M2 3.5h4M2 6h4M2 8.5h4M9 3.5h4M9 6h4M9 8.5h4" stroke="#777" />
        </svg>
      </StatusIcon>
      <StatusIcon $w={14} $ml={22}>
        <svg width="13" height="13" viewBox="0 0 13 13" fill="none">
          <path d="M0 1h13M1.5 1.5h10v6h-10zM6.5 7.5v4M3.5 12.5h6" stroke="#777" />
        </svg>
      </StatusIcon>
      <StatusIcon $w={7} $ml={17}>
        <svg width="7" height="3" viewBox="0 0 7 3"><rect y="0" width="7" height="2" fill="#666" /></svg>
      </StatusIcon>
      <ZoomTrack>
        <ZoomThumb />
        <ZoomTick />
      </ZoomTrack>
      <StatusIcon $w={7}>
        <svg width="7" height="7" viewBox="0 0 7 7"><path d="M0 2.5h7v2H0zM2.5 0h2v7h-2z" fill="#666" /></svg>
      </StatusIcon>
      <StatusText $ml={11}>50%</StatusText>
      <StatusIcon $w={16} $ml={13}>
        <svg width="13" height="13" viewBox="0 0 13 13" fill="none">
          <path d="M.5.5h12v12H.5z" stroke="#777" />
          <path d="M6.5 2v3M6.5 8v3M2 6.5h3M8 6.5h3" stroke="#777" strokeDasharray="1 1" />
        </svg>
      </StatusIcon>
    </StatusBar>
  </Page>
);

export default App;
